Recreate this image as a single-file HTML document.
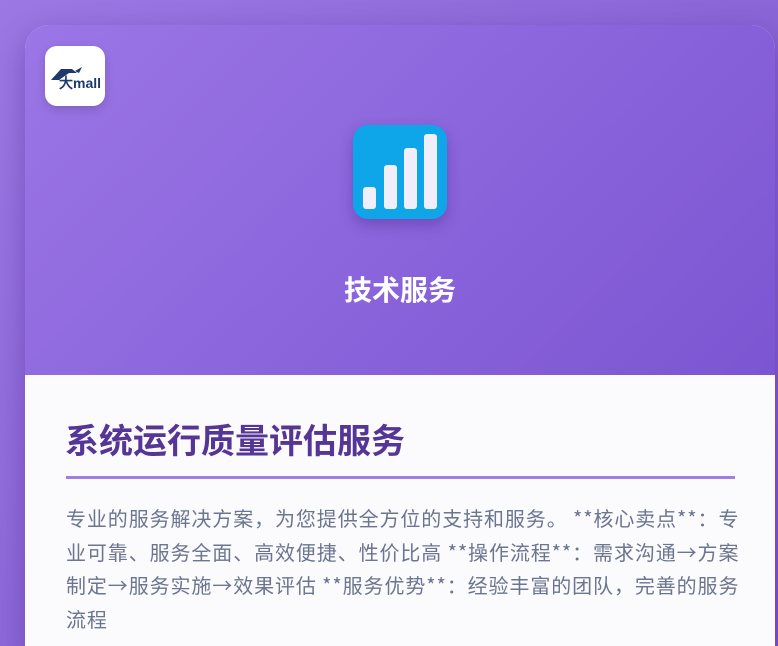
<!DOCTYPE html>
<html><head><meta charset="utf-8"><style>
*{margin:0;padding:0;box-sizing:border-box}
html,body{width:778px;height:646px;overflow:hidden}
body{background:linear-gradient(135deg,#9b78e4,#7d56cc);font-family:"Liberation Sans","Noto Sans CJK SC",sans-serif;position:relative}
.card{position:absolute;left:25px;top:25px;width:750px;height:625px;border-radius:24px 24px 0 0;overflow:hidden;box-shadow:0 10px 30px rgba(60,20,120,.35);background:#fbfbfe}
.head{height:350px;background:linear-gradient(135deg,#9b76e6,#7c55d2);position:relative}
.logo{position:absolute;left:20px;top:21px;width:60px;height:60px;background:#fff;border-radius:12px;box-shadow:0 4px 10px rgba(0,0,0,.15)}
.icon{position:absolute;left:328px;top:100px;width:94px;height:94px;background:#0ea5e9;border-radius:15px;box-shadow:0 6px 14px rgba(50,20,120,.3)}
.bar{position:absolute;bottom:10px;width:13px;background:#f1eefb;border-radius:3px}
.t{position:absolute;left:0;width:750px;top:244px;text-align:center;color:#fff;font-size:28px;font-weight:bold;font-family:"Noto Sans CJK SC",sans-serif;line-height:40px}
h1{position:absolute;left:40px;top:390px;font-size:34px;line-height:48px;color:#553596;font-weight:bold;font-family:"Noto Sans CJK SC",sans-serif}
.line{position:absolute;left:41px;top:451px;width:669px;height:3px;background:#a07ee6}
p{position:absolute;left:41px;top:476px;width:676px;font-size:20px;letter-spacing:0.9px;line-height:33.5px;color:#6b7590;font-family:"Noto Sans CJK SC",sans-serif}
</style></head><body>
<div class="card">
<div class="head">
<div class="logo"><svg width="60" height="60" viewBox="0 0 60 60"><path d="M6 34 L16 23 L27 23 L32 27 L24 27 L14 34 Z" fill="#1d3a6b"/><path d="M30 25 L37 21 L34 27 Z" fill="#1d3a6b"/><text x="14" y="42" font-family="Liberation Sans" font-weight="bold" font-size="14" fill="#1d3a6b">大mall</text></svg></div>
<div class="icon"><div class="bar" style="left:10px;height:22px"></div><div class="bar" style="left:31px;height:44px"></div><div class="bar" style="left:51px;height:61px"></div><div class="bar" style="left:71px;height:75px"></div></div>
<div class="t">技术服务</div>
</div>
<h1>系统运行质量评估服务</h1>
<div class="line"></div>
<p>专业的服务解决方案，为您提供全方位的支持和服务。 **核心卖点**：专业可靠、服务全面、高效便捷、性价比高 **操作流程**：需求沟通→方案制定→服务实施→效果评估 **服务优势**：经验丰富的团队，完善的服务流程</p>
</div>
</body></html>
